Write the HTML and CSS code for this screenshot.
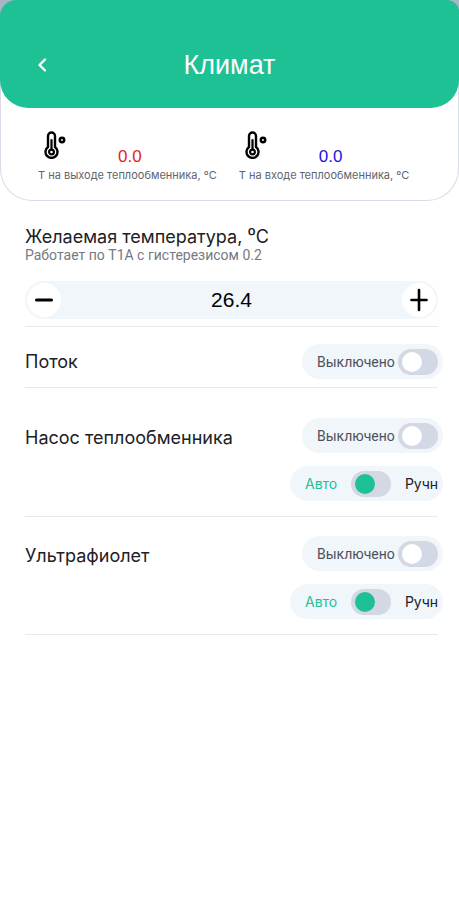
FILE: index.html
```
<!DOCTYPE html>
<html lang="ru">
<head>
<meta charset="utf-8">
<meta name="viewport" content="width=device-width, initial-scale=1">
<title>Климат</title>
<link rel="stylesheet" href="styles.css">
</head>
<body>
<svg class="symbols" aria-hidden="true">
  <symbol id="thermometer" viewBox="0 0 22 28">
    <g fill="none" stroke="currentColor" stroke-linecap="round">
      <path stroke-width="2.400" d="M4 16V5a3.500 3.500 0 0 1 7 0v11a6 6 0 1 1-7 0z"/>
      <path stroke-width="2.200" d="M7.500 9v9"/>
      <circle stroke-width="2.200" cx="7.500" cy="21" r="2.400"/>
      <circle stroke-width="2.500" cx="18" cy="9" r="2.200"/>
    </g>
  </symbol>
</svg>
<div class="top">
  <header class="header">
    <button class="back" type="button" aria-label="Назад">
      <svg width="10" height="16" viewBox="0 0 10 16"><path d="M8 2.500 2.500 8 8 13.500" fill="none" stroke="currentColor" stroke-width="2.400" stroke-linecap="round" stroke-linejoin="round"/></svg>
    </button>
    <h1>Климат</h1>
  </header>
  <section class="sensors">
    <div class="sensor">
      <svg class="thermo"><use href="#thermometer"/></svg>
      <output class="reading hot">0.0</output>
      <p>Т на выходе теплообменника, ºС</p>
    </div>
    <div class="sensor">
      <svg class="thermo"><use href="#thermometer"/></svg>
      <output class="reading cold">0.0</output>
      <p>Т на входе теплообменника, ºС</p>
    </div>
  </section>
</div>
<main>
  <section class="target">
    <h2><label for="temp">Желаемая температура, ⁰С</label></h2>
    <p>Работает по T1A с гистерезисом 0.2</p>
    <div class="stepper">
      <button type="button" aria-label="Уменьшить"><svg width="20" height="24" viewBox="0 0 20 24"><path d="M2.500 12h15" stroke="currentColor" stroke-width="3" stroke-linecap="round"/></svg></button>
      <input id="temp" type="text" inputmode="decimal" value="26.4">
      <button type="button" aria-label="Увеличить"><svg width="20" height="24" viewBox="0 0 20 24"><path d="M2.500 12h15M10 2v20" stroke="currentColor" stroke-width="2.600" stroke-linecap="round"/></svg></button>
    </div>
  </section>
  <section class="row compact">
    <h2>Поток</h2>
    <label class="pill"><span class="state">Выключено</span><input class="switch" type="checkbox"></label>
  </section>
  <section class="row spaced">
    <h2>Насос теплообменника</h2>
    <label class="pill"><span class="state">Выключено</span><input class="switch" type="checkbox"></label>
    <label class="pill mode"><span class="auto">Авто</span><input class="switch green" type="checkbox"><span class="manual">Ручн</span></label>
  </section>
  <section class="row">
    <h2>Ультрафиолет</h2>
    <label class="pill"><span class="state">Выключено</span><input class="switch" type="checkbox"></label>
    <label class="pill mode"><span class="auto">Авто</span><input class="switch green" type="checkbox"><span class="manual">Ручн</span></label>
  </section>
</main>
</body>
</html>
```
FILE: styles.css
```
* { box-sizing: border-box; }
body {
  margin: 0;
  background: #fff;
  color: #202126;
  font-family: Inter, "Noto Sans", sans-serif;
}
h1, h2, p { margin: 0; font-weight: 400; }
button { padding: 0; border: 0; color: inherit; display: grid; place-items: center; }
.symbols { display: none; }

.top {
  isolation: isolate;
  background: linear-gradient(#a9b4c5 0 28px, #fff 28px);
}
.header {
  display: grid;
  grid-template-columns: 36px 1fr 36px;
  align-items: center;
  height: 108px;
  padding: 22px 24px 0;
  border-radius: 16px 12px 28px 28px;
  background: #1dc194;
  color: #fff;
}
.back { width: 36px; height: 36px; background: none; }
h1 {
  font: 27px/32px "Liberation Sans", sans-serif;
  text-align: center;
}
.sensors {
  position: relative;
  z-index: -1;
  display: flex;
  gap: 22px;
  margin-top: -28px;
  padding: 51px 37px 17px;
  border: 1px solid #d9dbe6;
  border-top: 0;
  border-radius: 0 0 32px 32px;
}
.sensor {
  display: grid;
  grid-template-columns: 22px 1fr;
  grid-template-rows: 36px 16px;
  column-gap: 58px;
}
.thermo { width: 22px; height: 28px; margin-left: 6px; color: #000; }
.reading {
  align-self: end;
  font: 17px/20px "Liberation Sans", sans-serif;
}
.hot { color: #e51c1c; }
.cold { color: #1c14dc; }
.sensor p {
  grid-column: 1 / -1;
  color: #60646e;
  font-size: 11px;
  line-height: 16px;
  white-space: nowrap;
}

main { padding: 24px 21px 0 25px; }
h2 { font-size: 18px; line-height: 24px; }
.target { padding-bottom: 7px; border-bottom: 1px solid #e8e9ed; }
.target p {
  color: #767981;
  font-family: Roboto, sans-serif;
  font-size: 14px;
  line-height: 12px;
}
.stepper {
  display: flex;
  align-items: center;
  justify-content: space-between;
  height: 38px;
  margin-top: 20px;
  padding: 2px;
  border-radius: 19px;
  background: #f1f6fa;
}
.stepper button {
  flex: none;
  width: 34px;
  height: 34px;
  border-radius: 50%;
  background: #fff;
  color: #000;
}
.stepper input {
  flex: 1;
  min-width: 0;
  padding: 0;
  border: 0;
  background: none;
  color: #000;
  font: 21px/24px "Liberation Sans", sans-serif;
  text-align: center;
}

.row {
  display: grid;
  grid-template-columns: 1fr auto;
  align-items: center;
  row-gap: 13px;
  padding: 19px 0 15px;
  border-bottom: 1px solid #e8e9ed;
}
.row h2 { padding-top: 5px; }
.compact { padding: 17px 0 8px; }
.compact h2 { padding-top: 0; }
.spaced { padding: 30px 0 15px; }
.pill {
  grid-column: 2;
  justify-self: end;
  display: flex;
  align-items: center;
  justify-content: space-between;
  width: 141px;
  height: 35px;
  margin-right: -5px;
  padding: 0 5px 0 15px;
  border-radius: 18px;
  background: #f1f6fa;
  color: #4c505c;
  font-size: 14px;
  line-height: 20px;
}
.mode { width: 153px; }
.state { font-family: Roboto, sans-serif; }
.auto { color: #1dc194; }
.manual { color: #202126; }
.switch {
  appearance: none;
  flex: none;
  width: 40px;
  height: 26px;
  margin: 0;
  padding: 3px 4px;
  border-radius: 13px;
  background: #d4d8e4;
}
.switch::before {
  content: "";
  display: block;
  width: 20px;
  height: 20px;
  border-radius: 50%;
  background: #fff;
}
.green::before { background: #1dc194; }
.switch:checked::before { margin-left: auto; }
```
